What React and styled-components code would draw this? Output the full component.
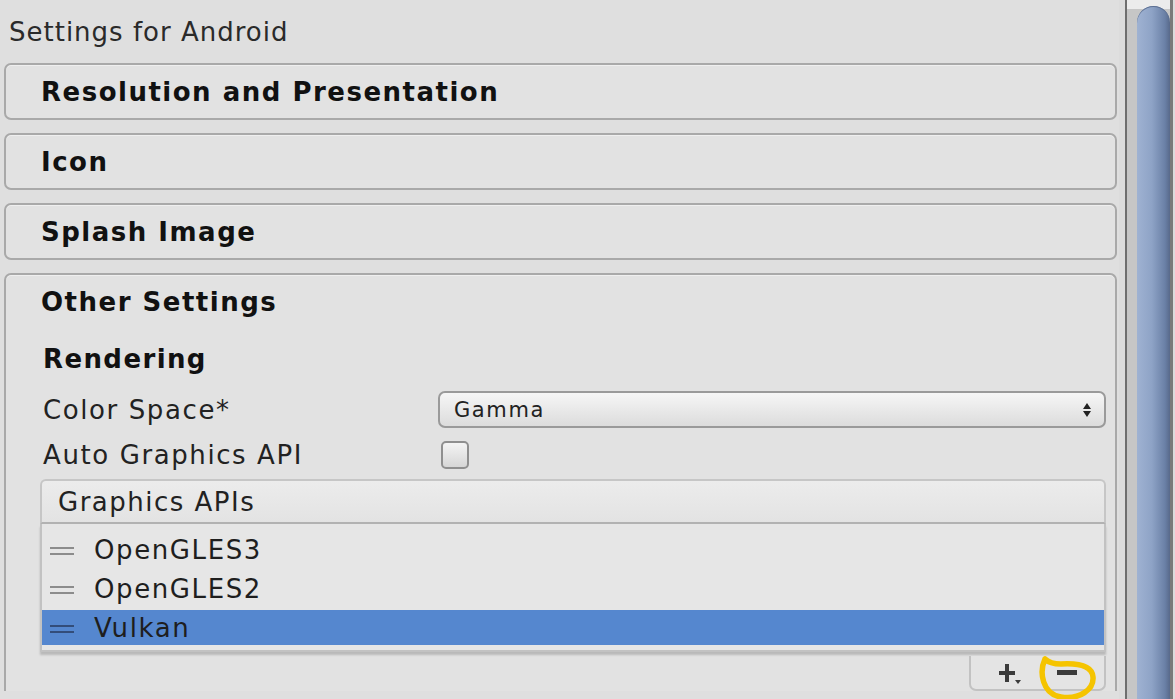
import styled, { createGlobalStyle } from 'styled-components'

const GlobalStyle = createGlobalStyle`
  html, body {
    margin: 0;
    padding: 0;
    background: #dfdfdf;
    overflow: hidden;
  }
  body {
    font-family: "DejaVu Sans", Verdana, sans-serif;
    color: #1c1c1c;
  }
`

const Page = styled.div`
  display: flex;
  width: 1175px;
  height: 699px;
  overflow: hidden;
`

const Main = styled.div`
  width: 1119px;
  padding-left: 4px;
  box-sizing: border-box;
`

const Heading = styled.div`
  height: 63px;
  padding-left: 5px;
  padding-top: 16px;
  box-sizing: border-box;
  font-size: 26px;
  line-height: 32px;
  letter-spacing: 1px;
  color: #2a2a2a;
`

const Foldout = styled.div`
  margin-right: 2px;
  margin-bottom: 13px;
  border: 2px solid #a9a9a9;
  border-radius: 7px;
  background: #e2e2e2;
  box-shadow: inset 0 1px 0 #efefef;
  box-sizing: border-box;
  ${p => p.open && 'border-bottom: none; border-bottom-left-radius: 0; border-bottom-right-radius: 0;'}
`

const FoldoutTitle = styled.div`
  height: 53px;
  display: flex;
  align-items: center;
  padding-left: 35px;
  font-size: 26px;
  font-weight: bold;
  color: #111;
  letter-spacing: 1.5px;
`

const Body = styled.div`
  padding: 0 9px 0 37px;
`

const SubHeading = styled.div`
  height: 50px;
  display: flex;
  align-items: center;
  margin-top: 6px;
  font-size: 26px;
  font-weight: bold;
  color: #111;
  letter-spacing: 1.4px;
`

const Row = styled.div`
  display: grid;
  grid-template-columns: 395px 1fr;
  align-items: center;
  height: ${p => p.h}px;
  margin-top: ${p => p.mt || 0}px;
`

const Label = styled.div`
  font-size: 26px;
  color: #222;
  letter-spacing: 1.6px;
`

const Select = styled.div`
  height: 37px;
  border: 2px solid #9a9a9a;
  border-radius: 7px;
  box-sizing: border-box;
  background: linear-gradient(#f6f6f6, #dcdcdc);
  display: flex;
  align-items: center;
  justify-content: space-between;
  padding: 0 12px 0 14px;
  font-size: 21px;
  letter-spacing: 1.6px;
  color: #222;
`

const Checkbox = styled.div`
  width: 28px;
  height: 28px;
  margin-left: 3px;
  border: 2px solid #8f8f8f;
  border-radius: 5px;
  box-sizing: border-box;
  background: linear-gradient(#f4f4f4, #d6d6d6);
`

const List = styled.div`
  margin: 9px 0 0 -3px;
  position: relative;
`

const ListHeader = styled.div`
  height: 45px;
  border: 2px solid #c6c6c6;
  border-bottom: 2px solid #b2b2b2;
  border-radius: 6px 6px 0 0;
  box-sizing: border-box;
  background: linear-gradient(#ececec, #e3e3e3);
  display: flex;
  align-items: center;
  padding-left: 16px;
  font-size: 26px;
  letter-spacing: 1.5px;
  color: #222;
`

const ListBody = styled.div`
  border: 2px solid #c2c2c2;
  border-top: none;
  background: #e6e6e6;
  padding: 8px 0 5px;
  box-shadow: 0 3px 2px rgba(0, 0, 0, 0.18);
  display: flex;
  flex-direction: column;
  gap: 4px;
`

const ListRow = styled.div`
  height: 35px;
  display: flex;
  align-items: center;
  background: ${p => (p.selected ? '#5587cf' : 'transparent')};
  font-size: 26px;
  letter-spacing: 1.6px;
  color: #1e1e1e;
`

const Handle = styled.span`
  width: 24px;
  margin: 3px 20px 0 8px;
  height: 8px;
  border-top: 2px solid ${p => (p.selected ? '#334d7a' : '#8c8c8c')};
  border-bottom: 2px solid ${p => (p.selected ? '#334d7a' : '#8c8c8c')};
  box-sizing: border-box;
`

const Footer = styled.div`
  display: flex;
  justify-content: flex-end;
`

const FooterTab = styled.div`
  position: relative;
  width: 137px;
  height: 35px;
  margin-top: 4px;
  border: 2px solid #c2c2c2;
  border-top: none;
  border-radius: 0 0 7px 7px;
  box-sizing: border-box;
  background: #e4e4e4;
  display: flex;
  align-items: center;
  padding-left: 26px;
  gap: 34px;
`

const Ring = styled.svg`
  position: absolute;
  left: 65px;
  top: -2px;
  pointer-events: none;
`

const ScrollArea = styled.div`
  flex: 1;
  display: flex;
  background: #dcdcdc;
`

const Track = styled.div`
  margin-left: 6px;
  width: 48px;
  border-left: 2px solid #6e6e6e;
  border-right: 3px solid #7a7a7a;
  background: #c6c6c6;
  display: flex;
  justify-content: flex-end;
  box-sizing: border-box;
  padding-top: 6px;
  background-image: linear-gradient(#ececec, #ececec);
  background-size: 100% 9px;
  background-repeat: no-repeat;
`

const Thumb = styled.div`
  width: 33px;
  border-radius: 17px 17px 0 0;
  background: linear-gradient(90deg, #9fb2d2 0%, #8ea3c6 45%, #6a80a6 85%, #58698a 100%);
  box-shadow: inset 0 1px 0 #5d7092;
`

function Plus() {
  return (
    <svg width="26" height="24" viewBox="0 0 26 24">
      <path d="M2 10h16v4H2zM8 3h4v18H8z" fill="#3b3b3b" />
      <path d="M18 19h6l-3 4z" fill="#3b3b3b" />
    </svg>
  )
}

function Minus() {
  return (
    <svg width="20" height="6" viewBox="0 0 20 6">
      <rect width="20" height="5" fill="#3b3b3b" />
    </svg>
  )
}

function Arrows() {
  return (
    <svg width="10" height="16" viewBox="0 0 10 16">
      <path d="M5 1l4 6H1zM5 15l4-6H1z" fill="#222" />
    </svg>
  )
}

const apis = ['OpenGLES3', 'OpenGLES2', 'Vulkan']

export default function App() {
  return (
    <Page>
      <GlobalStyle />
      <Main>
        <Heading>Settings for Android</Heading>
        <Foldout>
          <FoldoutTitle>Resolution and Presentation</FoldoutTitle>
        </Foldout>
        <Foldout>
          <FoldoutTitle>Icon</FoldoutTitle>
        </Foldout>
        <Foldout>
          <FoldoutTitle>Splash Image</FoldoutTitle>
        </Foldout>
        <Foldout open>
          <FoldoutTitle>Other Settings</FoldoutTitle>
          <Body>
            <SubHeading>Rendering</SubHeading>
            <Row h={37} mt={7}>
              <Label>Color Space*</Label>
              <Select>
                Gamma
                <Arrows />
              </Select>
            </Row>
            <Row h={30} mt={12}>
              <Label>Auto Graphics API</Label>
              <Checkbox />
            </Row>
            <List>
              <ListHeader>Graphics APIs</ListHeader>
              <ListBody>
                {apis.map(name => (
                  <ListRow key={name} selected={name === 'Vulkan'}>
                    <Handle selected={name === 'Vulkan'} />
                    {name}
                  </ListRow>
                ))}
              </ListBody>
              <Footer>
                <FooterTab>
                  <Plus />
                  <Minus />
                  <Ring width="62" height="48" viewBox="0 0 62 48">
                    <path
                      d="M9 5 C3 18 6 40 25 43 C44 46 58 35 57 23 C56 11 42 9 25 10 C17 10 12 8 9 5 Z"
                      fill="none"
                      stroke="#f5c400"
                      strokeWidth="5.5"
                      strokeLinejoin="round"
                    />
                  </Ring>
                </FooterTab>
              </Footer>
            </List>
          </Body>
        </Foldout>
      </Main>
      <ScrollArea>
        <Track>
          <Thumb />
        </Track>
      </ScrollArea>
    </Page>
  )
}
